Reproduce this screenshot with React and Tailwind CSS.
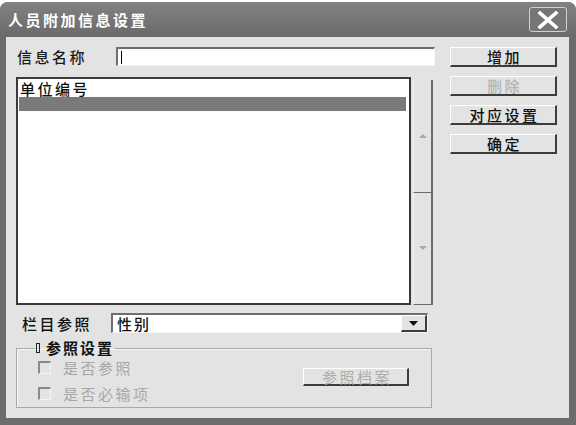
import React from 'react';

const raised =
  'border-t border-l border-t-white border-l-white border-b-2 border-r-2 border-b-[#3c3c3c] border-r-[#3c3c3c] bg-[#e3e3e3]';
const sunken =
  'border-t-2 border-l-2 border-b border-r border-t-[#6e6e6e] border-l-[#6e6e6e] border-b-[#f4f4f4] border-r-[#f4f4f4]';

function Btn({ label, disabled }) {
  return (
    <button
      className={`${raised} h-[20px] w-[107px] flex items-center justify-center text-[15px] font-medium leading-none tracking-[2.5px] pl-[3px] ${
        disabled ? 'text-[#b4b4b4]' : 'text-[#111]'
      }`}
    >
      {label}
    </button>
  );
}

function CheckRow({ label }) {
  return (
    <div className="flex items-center h-[16px]">
      <span className={`${sunken} w-[13px] h-[13px] bg-[#e3e3e3] border-t-[#8a8a8a] border-l-[#8a8a8a]`} />
      <span className="ml-[12px] text-[15px] leading-none tracking-[2.5px] text-[#a6a6a6]">{label}</span>
    </div>
  );
}

function ScrollHalf({ up }) {
  return (
    <div className="flex-1 flex items-center justify-center bg-[#e3e3e3] border-l border-l-[#f4f4f4] border-r-2 border-r-[#6a6a6a] border-b border-b-[#6a6a6a]">
      <svg width="10" height="6" viewBox="0 0 10 6">
        {up ? (
          <polygon points="5,1 9,5 1,5" fill="#a8a8a8" />
        ) : (
          <polygon points="1,1 9,1 5,5" fill="#a8a8a8" />
        )}
      </svg>
    </div>
  );
}

export default function App() {
  return (
    <div className="w-[576px] h-[425px] bg-white overflow-hidden font-['Noto_Sans_CJK_SC','Liberation_Sans',sans-serif]">
      <div className="mt-[2px] h-[423px] rounded-t-[8px] bg-[#6c6c6c] flex flex-col">
        {/* Title bar */}
        <div className="h-[35px] flex items-center justify-between pl-[8px] pr-[9px] rounded-t-[8px] bg-gradient-to-b from-[#828282] to-[#6a6a6a]">
          <span className="text-white font-bold text-[15px] leading-none tracking-[2.5px]">人员附加信息设置</span>
          <div className="w-[38px] h-[25px] rounded-[3px] border border-[#d0d0d0] bg-[#767676] flex items-center justify-center">
            <svg width="22" height="18" viewBox="0 0 22 18">
              <path d="M3 2 L19 16 M19 2 L3 16" stroke="white" strokeWidth="3.6" strokeLinecap="square" />
            </svg>
          </div>
        </div>

        {/* Body */}
        <div className="ml-[6px] mr-[7px] h-[381px] bg-[#e3e3e3] flex pt-[10px] pl-[10px]">
          {/* Left column */}
          <div className="w-[419px] flex flex-col">
            <div className="h-[19px] flex items-center">
              <span className="w-[100px] text-[15px] font-medium leading-none tracking-[2.5px] text-[#1a1a1a] pl-[1px]">信息名称</span>
              <div className={`${sunken} w-[319px] h-[19px] bg-white flex items-center pl-[3px]`}>
                <span className="w-[1px] h-[13px] bg-black" />
              </div>
            </div>

            <div className="mt-[11px] h-[228px] flex">
              <div className="w-[395px] h-full border-2 border-[#3a3a3a] bg-white flex flex-col pt-[1px] pl-[1px] pr-[3px]">
                <div className="h-[17px] flex items-center text-[15px] font-medium leading-none tracking-[2.5px] text-[#111] pl-[1px]">单位编号</div>
                <div className="h-[14px] bg-[#7a7a7a]" />
              </div>
              <div className="ml-[2px] mt-[3px] w-[20px] flex flex-col">
                <ScrollHalf up />
                <ScrollHalf />
              </div>
            </div>

            <div className="mt-[8px] h-[20px] flex items-center">
              <span className="w-[95px] pl-[6px] text-[15px] font-medium leading-none tracking-[2.5px] text-[#111]">栏目参照</span>
              <div className={`${sunken} w-[317px] h-[20px] bg-white flex items-center justify-between pl-[4px]`}>
                <span className="text-[15px] font-medium leading-none tracking-[2px] text-[#111]">性别</span>
                <div className={`${raised} w-[26px] h-full flex items-center justify-center`}>
                  <svg width="9" height="5" viewBox="0 0 9 5">
                    <polygon points="0,0 9,0 4.5,5" fill="#111" />
                  </svg>
                </div>
              </div>
            </div>

            <fieldset className="mt-[6px] w-[416px] h-[69px] border border-[#a8a8a8] shadow-[inset_1px_1px_0_#f6f6f6]">
              <legend className="ml-[18px] px-[1px] leading-[18px] text-[15px] text-[#111] flex items-center">
                <span className="inline-block w-[4px] h-[10px] border border-[#222] mr-[6px]" />
                <span className="tracking-[2px] font-semibold">参照设置</span>
              </legend>
              <div className="flex pl-[21px]">
                <div className="flex flex-col">
                  <div className="mt-[2px]">
                    <CheckRow label="是否参照" />
                  </div>
                  <div className="mt-[10px]">
                    <CheckRow label="是否必输项" />
                  </div>
                </div>
                <button
                  className={`${raised} ml-auto mr-[22px] mt-[11px] w-[106px] h-[18px] flex items-center justify-center text-[15px] leading-none tracking-[2.5px] pl-[3px] text-[#acacac]`}
                >
                  参照档案
                </button>
              </div>
            </fieldset>
          </div>

          {/* Right column */}
          <div className="ml-[15px] flex flex-col gap-[9px]">
            <Btn label="增加" />
            <Btn label="删除" disabled />
            <Btn label="对应设置" />
            <Btn label="确定" />
          </div>
        </div>
      </div>
    </div>
  );
}
